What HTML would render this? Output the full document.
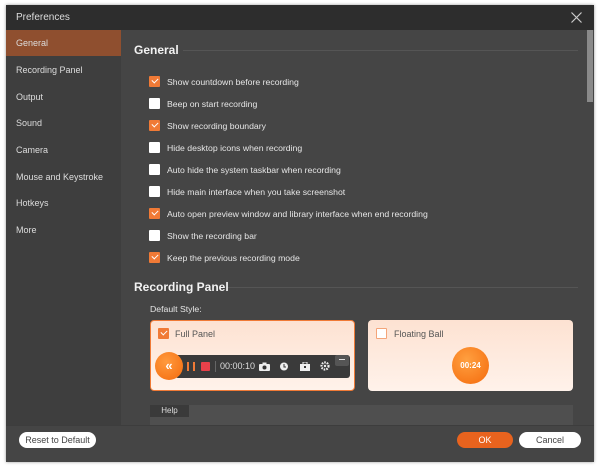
<!DOCTYPE html>
<html><head><meta charset="utf-8"><style>
*{margin:0;padding:0;box-sizing:border-box}
body{width:600px;height:467px;background:#fff;font-family:"Liberation Sans",sans-serif;position:relative;overflow:hidden}
.a{position:absolute}
.win{left:6px;top:5px;width:588px;height:457px;background:#454545;box-shadow:0 0 3px rgba(0,0,0,.4)}
.title{left:6px;top:5px;width:588px;height:25px;background:#2d2d2d;color:#ddd;font-size:10px;line-height:25px;padding-left:10px}
.side{left:6px;top:30px;width:115px;height:395px;background:#3e3e3e}
.si{left:6px;width:115px;height:26px;color:#ddd;font-size:9px;line-height:27px;padding-left:10px}
.cb{width:11px;height:11px;background:#fff;border-radius:1px}
.cb.on{background:#f07a36}
.cb.on::after{content:"";position:absolute;left:3px;top:2px;width:5px;height:3px;border-left:1.5px solid #fff;border-bottom:1.5px solid #fff;transform:rotate(-45deg)}
.lbl{color:#e6e6e6;font-size:8.7px;left:167px}
.h{color:#f2f2f2;font-weight:bold;font-size:12px}
.line{height:1px;background:#555}
.btn{height:16px;border-radius:8px;font-size:9px;text-align:center;line-height:16px}
</style></head><body>
<div class="a win"></div>
<div class="a title">Preferences</div>
<svg class="a" style="left:571px;top:12px" width="11" height="11"><path d="M0.5 0.5L10.5 10.5M10.5 0.5L0.5 10.5" stroke="#ccc" stroke-width="1.2"/></svg>
<div class="a side"></div>
<div class="a si" style="top:30px;background:#8f4f2f">General</div>
<div class="a si" style="top:57px">Recording Panel</div>
<div class="a si" style="top:84px">Output</div>
<div class="a si" style="top:110px">Sound</div>
<div class="a si" style="top:137px">Camera</div>
<div class="a si" style="top:164px">Mouse and Keystroke</div>
<div class="a si" style="top:190px">Hotkeys</div>
<div class="a si" style="top:217px">More</div>
<div class="a" style="left:587px;top:30px;width:6px;height:72px;background:#8a8a8a"></div>

<div class="a h" style="left:134px;top:43px">General</div>
<div class="a line" style="left:183px;top:50px;width:395px"></div>

<div class="a cb on" style="left:149px;top:76px"></div><div class="a lbl" style="top:77px">Show countdown before recording</div>
<div class="a cb" style="left:149px;top:98px"></div><div class="a lbl" style="top:99px">Beep on start recording</div>
<div class="a cb on" style="left:149px;top:120px"></div><div class="a lbl" style="top:121px">Show recording boundary</div>
<div class="a cb" style="left:149px;top:142px"></div><div class="a lbl" style="top:143px">Hide desktop icons when recording</div>
<div class="a cb" style="left:149px;top:164px"></div><div class="a lbl" style="top:165px">Auto hide the system taskbar when recording</div>
<div class="a cb" style="left:149px;top:186px"></div><div class="a lbl" style="top:187px">Hide main interface when you take screenshot</div>
<div class="a cb on" style="left:149px;top:208px"></div><div class="a lbl" style="top:209px">Auto open preview window and library interface when end recording</div>
<div class="a cb" style="left:149px;top:230px"></div><div class="a lbl" style="top:231px">Show the recording bar</div>
<div class="a cb on" style="left:149px;top:252px"></div><div class="a lbl" style="top:253px">Keep the previous recording mode</div>

<div class="a h" style="left:134px;top:280px">Recording Panel</div>
<div class="a line" style="left:228px;top:287px;width:350px"></div>
<div class="a lbl" style="left:150px;top:304px">Default Style:</div>

<div class="a" style="left:150px;top:320px;width:205px;height:71px;background:linear-gradient(#fde2d2,#fff2ea);border:1.5px solid #f07a36;border-radius:4px"></div>
<div class="a cb on" style="left:158px;top:328px"></div>
<div class="a" style="left:175px;top:329px;font-size:9px;color:#555">Full Panel</div>
<div class="a" style="left:175px;top:355px;width:175px;height:23px;background:#3a3a3a;border-radius:3px"></div>
<div class="a" style="left:335px;top:355px;width:14px;height:11px;background:#555;border-radius:2px"></div>
<div class="a" style="left:339px;top:359px;width:6px;height:1px;background:#ddd"></div>
<div class="a" style="left:155px;top:352px;width:28px;height:28px;border-radius:50%;background:radial-gradient(circle at 40% 35%,#ff9a3e,#f46a0c);color:#fff;font-size:13px;line-height:27px;text-align:center;font-weight:bold">«</div>
<div class="a" style="left:187px;top:362px;width:1.5px;height:9px;background:#f07a36"></div>
<div class="a" style="left:193px;top:362px;width:1.5px;height:9px;background:#f07a36"></div>
<div class="a" style="left:201px;top:362px;width:9px;height:9px;background:#e8414a;border-radius:1px"></div>
<div class="a" style="left:215px;top:361px;width:1px;height:11px;background:#666"></div>
<div class="a" style="left:220px;top:361px;font-size:9px;color:#ddd">00:00:10</div>
<svg class="a" style="left:259px;top:362px" width="11" height="9"><rect x="0" y="2" width="11" height="7" rx="1" fill="#eee"/><rect x="3.5" y="0.5" width="4" height="2" fill="#eee"/><circle cx="5.5" cy="5.5" r="2" fill="#333"/></svg>
<svg class="a" style="left:279px;top:361px" width="10" height="10"><circle cx="5" cy="5.5" r="4" fill="#eee"/><path d="M5 3v3h2" stroke="#333" fill="none"/></svg>
<svg class="a" style="left:300px;top:362px" width="10" height="9"><rect x="0" y="2" width="10" height="7" fill="#eee"/><rect x="3" y="0" width="4" height="3" fill="none" stroke="#eee"/><rect x="4" y="4" width="2" height="2" fill="#333"/></svg>
<svg class="a" style="left:320px;top:361px" width="10" height="10"><circle cx="5" cy="5" r="3.5" fill="none" stroke="#eee" stroke-width="2.2" stroke-dasharray="1.6 1"/><circle cx="5" cy="5" r="1.2" fill="#eee"/></svg>

<div class="a" style="left:368px;top:320px;width:205px;height:71px;background:linear-gradient(#fde2d2,#fff2ea);border-radius:4px"></div>
<div class="a cb" style="left:376px;top:328px;border:1px solid #f4a57a"></div>
<div class="a" style="left:394px;top:329px;font-size:9px;color:#555">Floating Ball</div>
<div class="a" style="left:452px;top:347px;width:37px;height:37px;border-radius:50%;background:radial-gradient(circle at 40% 35%,#ffa040,#f46a0c);color:#fff;font-size:8px;font-weight:bold;line-height:37px;text-align:center">00:24</div>

<div class="a" style="left:150px;top:405px;width:423px;height:20px;background:#4f4f4f"></div>
<div class="a" style="left:150px;top:405px;width:39px;height:12px;background:#3a3a3a;color:#ddd;font-size:8px;text-align:center;line-height:12px">Help</div>
<div class="a" style="left:6px;top:425px;width:588px;height:37px;background:#454545;border-top:1px solid #3d3d3d"></div>

<div class="a btn" style="left:19px;top:432px;width:77px;background:#fff;color:#444">Reset to Default</div>
<div class="a btn" style="left:457px;top:432px;width:56px;background:#e8631e;color:#fff">OK</div>
<div class="a btn" style="left:519px;top:432px;width:62px;background:#fff;color:#444">Cancel</div>
</body></html>
